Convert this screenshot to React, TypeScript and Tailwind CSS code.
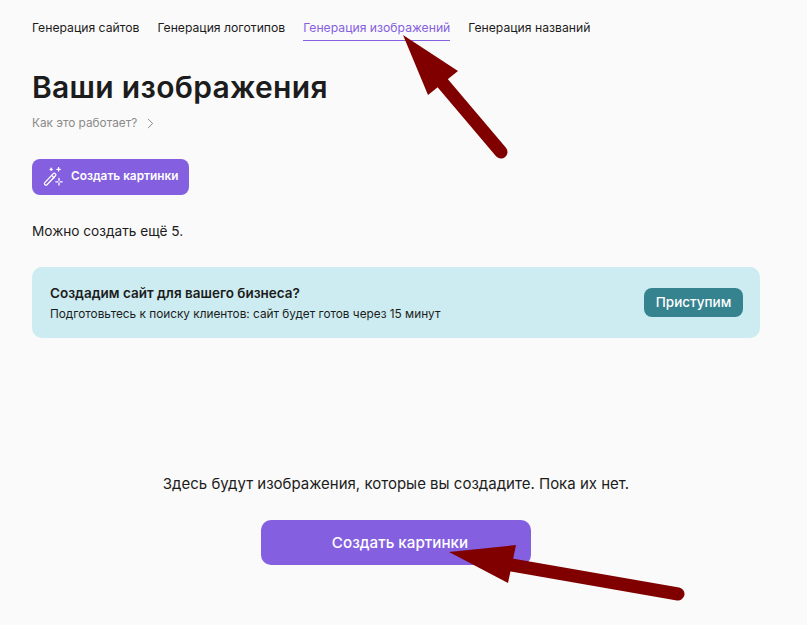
import { ChevronRight } from "lucide-react";

const navItems = [
  { label: "Генерация сайтов", active: false },
  { label: "Генерация логотипов", active: false },
  { label: "Генерация изображений", active: true },
  { label: "Генерация названий", active: false },
];

const WandIcon = () => (
  <svg width="20" height="20" viewBox="0 0 20 20" fill="none" stroke="#fff" strokeWidth="1.3" strokeLinecap="round">
    <path d="M1.8 15.6 10.3 6.6a1.3 1.3 0 0 1 1.9 0l.3.3a1.3 1.3 0 0 1 0 1.8L4 17.8a1.3 1.3 0 0 1-1.9 0l-.3-.3a1.4 1.4 0 0 1 0-1.9Z" />
    <path d="m8.6 8.4 2.3 2.3" />
    <path d="M15.6 .6v3.4M13.9 2.3h3.4" />
    <path d="M8.2 1.2v2.2M7.1 2.3h2.2" />
    <path d="M16 11.5v2M16 16v2M12.8 14.8h2M17.2 14.8h2" />
  </svg>
);

// Annotation arrows painted over the screenshot
const Arrows = () => (
  <svg className="absolute inset-0 pointer-events-none" width="807" height="625" viewBox="0 0 807 625">
    <path d="M440 80 501 152" stroke="#800000" strokeWidth="13" strokeLinecap="round" />
    <path d="M403 35 458 71 428 95Z" fill="#800000" />
    <path d="M500 563 678 594" stroke="#800000" strokeWidth="13" strokeLinecap="round" />
    <path d="M449 552 516 545 508 583Z" fill="#800000" />
  </svg>
);

export default function App() {
  return (
    <div className="relative w-[807px] h-[625px] overflow-hidden bg-[#fafafa] px-8 font-['Inter',sans-serif] text-[#1c1c1c]">
      <div className="w-[728px]">
        <nav className="flex gap-[18px] pt-[20px] text-[12.2px] leading-[16px]">
          {navItems.map((item) => (
            <a
              key={item.label}
              className={`pb-[4px] border-b ${item.active ? "text-[#8560e0] border-[#8560e0]" : "border-transparent"}`}
            >
              {item.label}
            </a>
          ))}
        </nav>

        <h1 className="mt-[24px] text-[30px] leading-[44px] font-semibold tracking-[0.3px]">Ваши изображения</h1>

        <div className="mt-[5px] flex items-center gap-[5px] text-[11.8px] leading-[18px] text-[#8a8a8a]">
          Как это работает?
          <ChevronRight size={17} strokeWidth={1.25} className="text-[#777777]" />
        </div>

        <button className="mt-[27px] flex items-center gap-[8px] w-[157px] h-[36px] pl-[11px] rounded-[8px] bg-[#845fe0] text-white text-[11.8px] font-semibold">
          <WandIcon />
          Создать картинки
        </button>

        <p className="mt-[26px] text-[13.65px] leading-[20px]">Можно создать ещё 5.</p>

        <div className="mt-[26px] h-[71px] flex items-center justify-between pl-[18px] pr-[17px] rounded-[10px] bg-[#cdecf1]">
          <div>
            <h2 className="text-[13.5px] leading-[18px] font-semibold">Создадим сайт для вашего бизнеса?</h2>
            <p className="mt-[4px] text-[11.8px] leading-[16px]">Подготовьтесь к поиску клиентов: сайт будет готов через 15 минут</p>
          </div>
          <button className="w-[99px] h-[29px] rounded-[8px] bg-[#34838f] text-white text-[13.5px] font-medium">Приступим</button>
        </div>

        <div className="mt-[135px] flex flex-col items-center">
          <p className="text-[15px] leading-[22px]">Здесь будут изображения, которые вы создадите. Пока их нет.</p>
          <button className="mt-[25px] w-[270px] h-[45px] pt-[2px] pl-[8px] rounded-[10px] bg-[#845fe0] text-white text-[15.2px] font-medium">Создать картинки</button>
        </div>
      </div>

      <Arrows />
    </div>
  );
}
